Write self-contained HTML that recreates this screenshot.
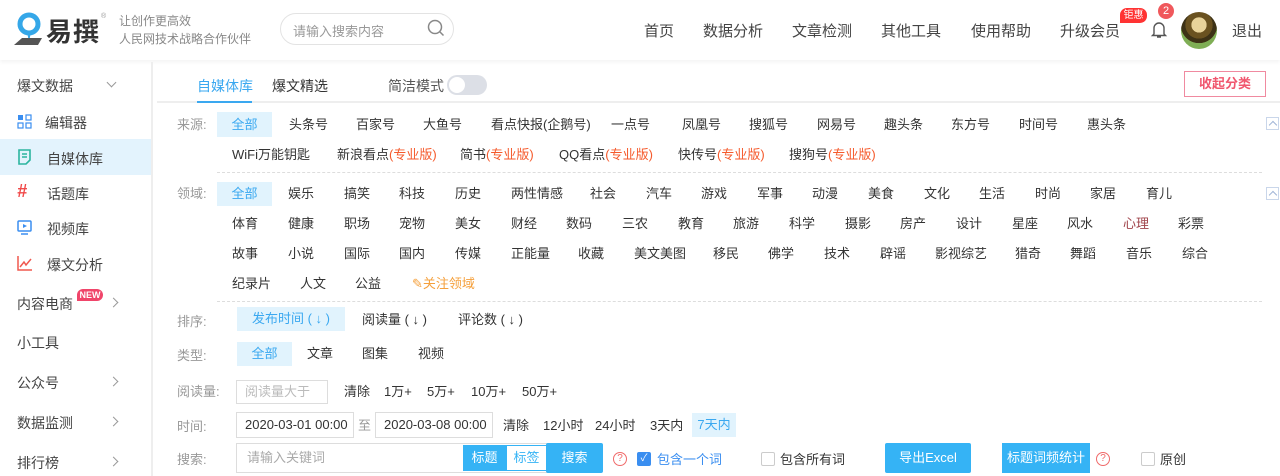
<!DOCTYPE html>
<html><head><meta charset="utf-8"><style>
*{margin:0;padding:0;box-sizing:border-box}
body{width:1280px;height:476px;overflow:hidden;background:#fff;font-family:"Liberation Sans","Noto Sans CJK SC",sans-serif;color:#333;position:relative;font-size:13px}
.a{position:absolute;white-space:nowrap}
.t{position:absolute;white-space:nowrap;font-size:13px;color:#333;line-height:18px}
.l{position:absolute;white-space:nowrap;font-size:13px;color:#999;line-height:18px;left:177px}
.sel{position:absolute;background:#e1f3fd;color:#3aa8f0;font-size:13px;text-align:center}
.r{color:#f55a2c}
.nav{position:absolute;top:20px;font-size:15px;color:#444}
.side{position:absolute;left:17px;font-size:14px;color:#444}
.ico{position:absolute;left:17px}
.arrow{position:absolute;left:110px;width:7px;height:7px;border-right:1.3px solid #999;border-top:1.3px solid #999;transform:rotate(45deg)}
.box{position:absolute;border:1px solid #ddd;background:#fff;font-size:13px;line-height:28px;padding-left:8px}
.btn{position:absolute;background:#35b3f5;color:#fff;font-size:13px;text-align:center;border-radius:2px}
.cb{position:absolute;width:14px;height:14px;border:1px solid #ccc;border-radius:2px;background:#fff}
.dash{position:absolute;left:217px;right:18px;border-top:1px dashed #ddd}
.up{position:absolute;left:1266px;width:13px;height:13px;border:1px solid #c9d6ea}
.up:after{content:"";position:absolute;left:3px;top:4px;width:5px;height:5px;border-left:1px solid #9fb4d6;border-top:1px solid #9fb4d6;transform:rotate(45deg)}
.q{position:absolute;width:14px;height:14px;border:1px solid #f06a6a;border-radius:50%;color:#f06a6a;font-size:10px;line-height:12px;text-align:center}
</style></head><body>
<div class="a" style="left:0;top:0;width:1280px;height:60px;background:#fff;box-shadow:0 2px 4px rgba(0,0,0,.05)"></div>
<svg class="a" style="left:12px;top:12px" width="34" height="34" viewBox="0 0 34 34">
<circle cx="17" cy="12" r="9" fill="none" stroke="#35a7e8" stroke-width="5"/>
<path d="M15 20 L19 20 L17 30 Z" fill="#35a7e8"/>
<path d="M2 33 L10 26 L30 26 L26 33 Z" fill="#555"/>
</svg>
<div class="a" style="left:46px;top:12px;font-size:26px;color:#333;font-weight:bold;letter-spacing:1px">易撰</div>
<div class="a" style="left:101px;top:13px;font-size:7px;color:#999">®</div>
<div class="a" style="left:119px;top:12px;font-size:12px;color:#888;line-height:18px">让创作更高效<br>人民网技术战略合作伙伴</div>
<div class="a" style="left:280px;top:13px;width:174px;height:32px;border:1px solid #e3e3e3;border-radius:16px"></div>
<div class="a" style="left:293px;top:21px;font-size:13px;color:#999">请输入搜索内容</div>
<svg class="a" style="left:427px;top:19px" width="18" height="18" viewBox="0 0 18 18"><circle cx="8" cy="8" r="6.5" fill="none" stroke="#888" stroke-width="1.5"/><path d="M13 13 L16.5 16.5" stroke="#888" stroke-width="1.5"/></svg>
<div class="nav" style="left:644px">首页</div>
<div class="nav" style="left:703px">数据分析</div>
<div class="nav" style="left:792px">文章检测</div>
<div class="nav" style="left:881px">其他工具</div>
<div class="nav" style="left:971px">使用帮助</div>
<div class="nav" style="left:1060px">升级会员</div>
<div class="a" style="left:1120px;top:8px;width:27px;height:15px;background:#f33;border-radius:7px 7px 7px 0;color:#fff;font-size:10px;text-align:center;line-height:15px">钜惠</div>
<svg class="a" style="left:1150px;top:20px" width="18" height="19" viewBox="0 0 18 19"><path d="M4 14 L4 8 A5 5 0 0 1 14 8 L14 14 L15.5 15.5 L2.5 15.5 Z M7 17 L11 17" fill="none" stroke="#555" stroke-width="1.4"/></svg>
<div class="a" style="left:1158px;top:3px;width:16px;height:16px;background:#f0585c;border-radius:50%;color:#fff;font-size:11px;text-align:center;line-height:16px">2</div>
<div class="a" style="left:1181px;top:12px;width:36px;height:37px;border-radius:50%;background:radial-gradient(circle at 50% 35%,#e8d39a 0 25%,#6a5220 26% 45%,#3d3216 46% 60%,#7fae55 61%)"></div>
<div class="nav" style="left:1232px">退出</div>
<div class="a" style="left:151px;top:62px;width:2px;height:414px;background:#eee"></div>
<div class="side" style="top:76px">爆文数据</div>
<div class="a" style="left:108px;top:79px;width:7px;height:7px;border-right:1.3px solid #999;border-bottom:1.3px solid #999;transform:rotate(45deg)"></div>
<svg class="ico" style="top:114px" width="15" height="15" viewBox="0 0 15 15"><rect x="1" y="1" width="5" height="5" fill="#3a8ef0"/><rect x="9" y="1" width="5" height="5" fill="none" stroke="#3a8ef0" stroke-width="1.2"/><rect x="1" y="9" width="5" height="5" fill="none" stroke="#3a8ef0" stroke-width="1.2"/><rect x="9" y="9" width="5" height="5" fill="none" stroke="#3a8ef0" stroke-width="1.2"/></svg>
<div class="side" style="left:45px;top:113px">编辑器</div>
<div class="a" style="left:0;top:139px;width:151px;height:36px;background:#e3f3fd"></div>
<svg class="ico" style="top:149px" width="15" height="16" viewBox="0 0 15 16"><path d="M2 1 H13 V11 L9 15 H2 Z" fill="none" stroke="#2cb5a0" stroke-width="1.6"/><path d="M5 5 H10 M5 8 H10" stroke="#2cb5a0" stroke-width="1.4"/></svg>
<div class="side" style="left:47px;top:149px">自媒体库</div>
<div class="ico" style="top:181px;color:#f04a4a;font-size:18px;font-weight:bold;font-style:italic">#</div>
<div class="side" style="left:47px;top:184px">话题库</div>
<svg class="ico" style="top:220px" width="15" height="15" viewBox="0 0 15 15"><rect x="1" y="1" width="13" height="10" rx="1" fill="none" stroke="#3a8ef0" stroke-width="1.5"/><path d="M6 4 L10 6 L6 8 Z" fill="#3a8ef0"/><path d="M4 14 H11" stroke="#3a8ef0" stroke-width="1.5"/></svg>
<div class="side" style="left:47px;top:219px">视频库</div>
<svg class="ico" style="top:255px" width="16" height="16" viewBox="0 0 16 16"><path d="M1 1 V15 H15" fill="none" stroke="#f0584f" stroke-width="1.5"/><path d="M3 12 L7 7 L9 10 L14 4" fill="none" stroke="#f0584f" stroke-width="1.5"/></svg>
<div class="side" style="left:47px;top:255px">爆文分析</div>
<div class="side" style="top:294px">内容电商</div>
<div class="a" style="left:77px;top:289px;width:26px;height:12px;background:#f0456a;border-radius:6px 6px 6px 0;color:#fff;font-size:9px;text-align:center;line-height:12px;font-weight:bold">NEW</div>
<div class="arrow" style="top:299px"></div>
<div class="side" style="top:333px">小工具</div>
<div class="side" style="top:373px">公众号</div><div class="arrow" style="top:378px"></div>
<div class="side" style="top:413px">数据监测</div><div class="arrow" style="top:418px"></div>
<div class="side" style="top:453px">排行榜</div><div class="arrow" style="top:458px"></div>
<div class="a" style="left:157px;top:101px;width:1123px;height:2px;background:#eee"></div>
<div class="a" style="left:197px;top:76px;font-size:14px;color:#3aa8f0">自媒体库</div>
<div class="a" style="left:197px;top:101px;width:55px;height:2px;background:#3aa8f0"></div>
<div class="a" style="left:272px;top:76px;font-size:14px;color:#333">爆文精选</div>
<div class="a" style="left:388px;top:76px;font-size:14px;color:#555">简洁模式</div>
<div class="a" style="left:447px;top:75px;width:40px;height:20px;border-radius:10px;background:#dcdfe6"></div>
<div class="a" style="left:449px;top:77px;width:16px;height:16px;border-radius:50%;background:#fff"></div>
<div class="a" style="left:1184px;top:71px;width:82px;height:26px;border:1px solid #f08aa0;color:#f0566e;font-size:13px;text-align:center;line-height:24px;font-weight:bold">收起分类</div>
<div class="l" style="top:116px">来源:</div>
<div class="sel" style="left:217px;top:112px;width:55px;height:25px;line-height:25px">全部</div>
<div class="t" style="left:289px;top:116px">头条号</div><div class="t" style="left:356px;top:116px">百家号</div><div class="t" style="left:423px;top:116px">大鱼号</div><div class="t" style="left:491px;top:116px">看点快报(企鹅号)</div><div class="t" style="left:611px;top:116px">一点号</div><div class="t" style="left:682px;top:116px">凤凰号</div><div class="t" style="left:749px;top:116px">搜狐号</div><div class="t" style="left:817px;top:116px">网易号</div><div class="t" style="left:884px;top:116px">趣头条</div><div class="t" style="left:951px;top:116px">东方号</div><div class="t" style="left:1019px;top:116px">时间号</div><div class="t" style="left:1087px;top:116px">惠头条</div>
<div class="up" style="top:117px"></div>
<div class="t" style="left:232px;top:146px">WiFi万能钥匙</div><div class="t" style="left:337px;top:146px">新浪看点<span class="r">(专业版)</span></div><div class="t" style="left:460px;top:146px">简书<span class="r">(专业版)</span></div><div class="t" style="left:559px;top:146px">QQ看点<span class="r">(专业版)</span></div><div class="t" style="left:678px;top:146px">快传号<span class="r">(专业版)</span></div><div class="t" style="left:789px;top:146px">搜狗号<span class="r">(专业版)</span></div>
<div class="dash" style="top:172px"></div>
<div class="l" style="top:185px">领域:</div>
<div class="sel" style="left:217px;top:182px;width:55px;height:24px;line-height:24px">全部</div>
<div class="up" style="top:187px"></div>
<div class="t" style="left:288px;top:185px">娱乐</div><div class="t" style="left:344px;top:185px">搞笑</div><div class="t" style="left:399px;top:185px">科技</div><div class="t" style="left:455px;top:185px">历史</div><div class="t" style="left:511px;top:185px">两性情感</div><div class="t" style="left:590px;top:185px">社会</div><div class="t" style="left:646px;top:185px">汽车</div><div class="t" style="left:701px;top:185px">游戏</div><div class="t" style="left:757px;top:185px">军事</div><div class="t" style="left:812px;top:185px">动漫</div><div class="t" style="left:868px;top:185px">美食</div><div class="t" style="left:924px;top:185px">文化</div><div class="t" style="left:979px;top:185px">生活</div><div class="t" style="left:1035px;top:185px">时尚</div><div class="t" style="left:1090px;top:185px">家居</div><div class="t" style="left:1146px;top:185px">育儿</div>
<div class="t" style="left:232px;top:215px">体育</div><div class="t" style="left:288px;top:215px">健康</div><div class="t" style="left:344px;top:215px">职场</div><div class="t" style="left:399px;top:215px">宠物</div><div class="t" style="left:455px;top:215px">美女</div><div class="t" style="left:511px;top:215px">财经</div><div class="t" style="left:566px;top:215px">数码</div><div class="t" style="left:622px;top:215px">三农</div><div class="t" style="left:678px;top:215px">教育</div><div class="t" style="left:733px;top:215px">旅游</div><div class="t" style="left:789px;top:215px">科学</div><div class="t" style="left:845px;top:215px">摄影</div><div class="t" style="left:900px;top:215px">房产</div><div class="t" style="left:956px;top:215px">设计</div><div class="t" style="left:1012px;top:215px">星座</div><div class="t" style="left:1067px;top:215px">风水</div><div class="t" style="left:1123px;top:215px;color:#a0434a">心理</div><div class="t" style="left:1178px;top:215px">彩票</div>
<div class="t" style="left:232px;top:245px">故事</div><div class="t" style="left:288px;top:245px">小说</div><div class="t" style="left:344px;top:245px">国际</div><div class="t" style="left:399px;top:245px">国内</div><div class="t" style="left:455px;top:245px">传媒</div><div class="t" style="left:511px;top:245px">正能量</div><div class="t" style="left:578px;top:245px">收藏</div><div class="t" style="left:634px;top:245px">美文美图</div><div class="t" style="left:713px;top:245px">移民</div><div class="t" style="left:768px;top:245px">佛学</div><div class="t" style="left:824px;top:245px">技术</div><div class="t" style="left:880px;top:245px">辟谣</div><div class="t" style="left:935px;top:245px">影视综艺</div><div class="t" style="left:1015px;top:245px">猎奇</div><div class="t" style="left:1070px;top:245px">舞蹈</div><div class="t" style="left:1126px;top:245px">音乐</div><div class="t" style="left:1182px;top:245px">综合</div>
<div class="t" style="left:232px;top:275px">纪录片</div><div class="t" style="left:300px;top:275px">人文</div><div class="t" style="left:355px;top:275px">公益</div><div class="t" style="left:412px;top:275px;color:#f5a03c">✎关注领域</div>
<div class="dash" style="top:301px"></div>
<div class="l" style="top:313px">排序:</div>
<div class="sel" style="left:237px;top:307px;width:108px;height:24px;line-height:24px">发布时间 ( ↓ )</div>
<div class="t" style="left:362px;top:311px">阅读量 ( ↓ )</div><div class="t" style="left:458px;top:311px">评论数 ( ↓ )</div>
<div class="l" style="top:347px">类型:</div>
<div class="sel" style="left:237px;top:342px;width:55px;height:24px;line-height:24px">全部</div>
<div class="t" style="left:307px;top:345px">文章</div><div class="t" style="left:362px;top:345px">图集</div><div class="t" style="left:418px;top:345px">视频</div>
<div class="l" style="top:383px">阅读量:</div>
<div class="box" style="left:236px;top:380px;width:92px;height:24px;line-height:22px;color:#bbb;padding-left:8px">阅读量大于</div>
<div class="t" style="left:344px;top:383px">清除</div>
<div class="t" style="left:384px;top:383px">1万+</div><div class="t" style="left:427px;top:383px">5万+</div><div class="t" style="left:471px;top:383px">10万+</div><div class="t" style="left:522px;top:383px">50万+</div>
<div class="l" style="top:418px">时间:</div>
<div class="box" style="left:236px;top:412px;width:118px;height:26px;line-height:24px">2020-03-01 00:00</div>
<div class="t" style="left:358px;top:417px;color:#999">至</div>
<div class="box" style="left:375px;top:412px;width:118px;height:26px;line-height:24px">2020-03-08 00:00</div>
<div class="t" style="left:503px;top:417px">清除</div><div class="t" style="left:543px;top:417px">12小时</div><div class="t" style="left:595px;top:417px">24小时</div><div class="t" style="left:650px;top:417px">3天内</div>
<div class="sel" style="left:692px;top:413px;width:44px;height:24px;line-height:24px">7天内</div>
<div class="l" style="top:451px">搜索:</div>
<div class="box" style="left:236px;top:443px;width:313px;height:30px;color:#aaa;padding-left:10px;line-height:28px">请输入关键词</div>
<div class="btn" style="left:463px;top:445px;width:43px;height:26px;line-height:26px;border-radius:0">标题</div>
<div class="a" style="left:506px;top:445px;width:41px;height:26px;border:1px solid #35b3f5;color:#35b3f5;text-align:center;line-height:24px;font-size:13px">标签</div>
<div class="btn" style="left:546px;top:443px;width:57px;height:30px;line-height:30px">搜索</div>
<div class="q" style="left:613px;top:452px">?</div>
<div class="a" style="left:637px;top:452px;width:14px;height:14px;background:#3a8ef0;border-radius:2px;color:#fff;font-size:10px;text-align:center;line-height:14px">✓</div>
<div class="t" style="left:657px;top:451px;color:#3a8ef0">包含一个词</div>
<div class="cb" style="left:761px;top:452px"></div>
<div class="t" style="left:780px;top:451px">包含所有词</div>
<div class="btn" style="left:885px;top:443px;width:86px;height:30px;line-height:30px">导出Excel</div>
<div class="btn" style="left:1002px;top:443px;width:88px;height:30px;line-height:30px;border-radius:0">标题词频统计</div>
<div class="q" style="left:1096px;top:452px">?</div>
<div class="cb" style="left:1141px;top:452px"></div>
<div class="t" style="left:1160px;top:451px">原创</div>
</body></html>
